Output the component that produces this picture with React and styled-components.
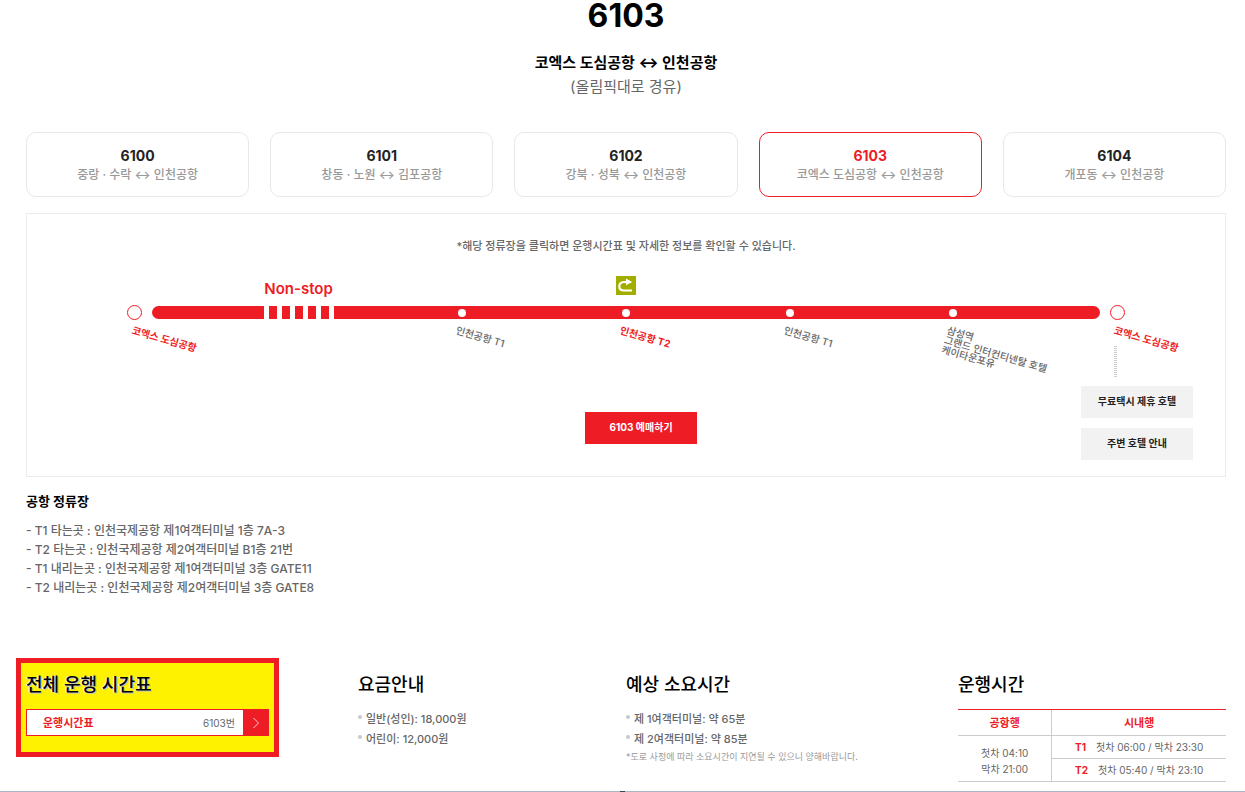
import React from "react";
import styled, { createGlobalStyle, css } from "styled-components";

const RED = "#ee1c25";

const GlobalStyle = createGlobalStyle`
  *, *::before, *::after { box-sizing: border-box; }
  body {
    margin: 0;
    background: #fff;
    color: #666;
    font-family: Inter, "Noto Sans CJK KR", sans-serif;
    font-size: 12px;
    line-height: 20px;
  }
  h1, h2, h3, p, ul, ol { margin: 0; padding: 0; }
  ul, ol { list-style: none; }
  a { color: inherit; text-decoration: none; }
  button { font-family: inherit; cursor: pointer; }
`;

const Page = styled.main`
  padding: 0 19px 9px 26px;
`;

const Header = styled.header`
  text-align: center;
`;

const RouteNumber = styled.h1`
  color: #000;
  font-size: 32px;
  line-height: 32px;
  font-weight: 700;
`;

const RouteName = styled.p`
  margin-top: 19px;
  color: #000;
  font-size: 15px;
  line-height: 24px;
  font-weight: 700;
`;

const RouteVia = styled.p`
  font-size: 15px;
  line-height: 24px;
`;

const RouteTabs = styled.nav`
  display: grid;
  grid-template-columns: repeat(5, 1fr);
  gap: 21px;
  margin-top: 33px;
`;

const RouteTab = styled.a`
  padding: 13px 8px 12px;
  border: 1px solid ${(p) => (p.$active ? RED : "#e8e8e8")};
  border-radius: 10px;
  text-align: center;
  color: #999;
  font-weight: 500;
  line-height: 18px;

  strong {
    display: block;
    color: ${(p) => (p.$active ? RED : "#222")};
    font-size: 14px;
    line-height: 20px;
    font-weight: 700;
  }
`;

const RoutePanel = styled.section`
  margin-top: 16px;
  padding: 22px 0 16px;
  border: 1px solid #ebebeb;
`;

const Notice = styled.p`
  margin-bottom: 20px;
  text-align: center;
  font-size: 11px;
  font-weight: 500;
`;

const Track = styled.div`
  display: grid;
  padding: 0 26px;
`;

const TrackBar = styled.div`
  grid-area: 1 / 1;
  height: 13px;
  margin: 30px calc(100% / 14 + 17px) 0;
  border-radius: 7px;
  background: ${RED};
`;

const Stops = styled.ol`
  grid-area: 1 / 1;
  display: grid;
  grid-template-columns: repeat(7, minmax(0, 1fr));
`;

const Stop = styled.li`
  display: flex;
  flex-direction: column;
  align-items: center;
`;

const StopTop = styled.div`
  height: 29px;
  color: ${RED};
  font-size: 15px;
  line-height: 26px;
  font-weight: 600;

  svg { display: block; }
`;

const markers = {
  terminal: css`
    width: 15px;
    border: 1px solid ${RED};
    border-radius: 50%;
    background: #fff;
  `,
  stop: css`
    width: 8px;
    height: 8px;
    margin: 4px 0 3px;
    border-radius: 50%;
    background: #fff;
  `,
  express: css`
    width: 70px;
    background: repeating-linear-gradient(90deg, #fff 0 5px, ${RED} 5px 13px);
    border: solid #fff;
    border-width: 1px 0;
    background-clip: padding-box;
  `,
};

const Marker = styled.span`
  flex: none;
  height: 15px;
  ${(p) => markers[p.$kind]}
`;

const StopLabel = styled.a`
  align-self: flex-start;
  height: 26px;
  margin-left: calc(50% - ${(p) => (p.$end ? 0 : 3)}px);
  padding-top: 5px;
  color: ${(p) => (p.$strong ? RED : "#666")};
  font-size: 10px;
  line-height: 10px;
  font-weight: ${(p) => (p.$strong ? 700 : 500)};
  white-space: pre;
  transform: rotate(16deg);
  transform-origin: 0 0;
`;

const Connector = styled.span`
  align-self: flex-start;
  width: 3px;
  height: 32px;
  margin-left: calc(50% - 3px);
  background: repeating-linear-gradient(#ccc 0 1px, #fff 1px 2px);
`;

const PanelActions = styled.div`
  display: grid;
  grid-template-columns: 1fr auto 1fr;
  margin-top: 8px;
  padding: 0 32px 0 62px;
`;

const BookButton = styled.button`
  grid-column: 2;
  width: 112px;
  height: 32px;
  margin-top: 26px;
  padding: 0 0 3px;
  border: 0;
  background: ${RED};
  color: #fff;
  font-size: 10px;
  font-weight: 700;
`;

const HotelLinks = styled.div`
  justify-self: end;
  display: grid;
  gap: 10px;
`;

const HotelButton = styled.button`
  width: 112px;
  height: 32px;
  padding: 0 0 3px;
  border: 0;
  background: #f2f2f2;
  color: #222;
  font-size: 10px;
  font-weight: 700;
`;

const Boarding = styled.section`
  margin-top: 15px;
`;

const BoardingTitle = styled.h2`
  margin-bottom: 11px;
  color: #000;
  font-size: 13px;
  line-height: 18px;
  font-weight: 700;
`;

const BoardingList = styled.ul`
  line-height: 19px;
  font-weight: 500;
`;

const InfoGrid = styled.div`
  display: grid;
  grid-template-columns: 83fr 67fr 83fr 67fr;
  align-items: start;
  margin-top: 61px;
`;

const InfoBlock = styled.section`
  padding-top: 12px;
`;

const HighlightBlock = styled.section`
  margin: 0 79px 0 -10px;
  padding: 7px 5px 16px;
  border: 5px solid ${RED};
  background: #fff200;

  h2 { text-shadow: 1px 1px 0 #c4c4cc, -1px 0 0 #fff; }
`;

const InfoTitle = styled.h2`
  margin-bottom: 9px;
  color: #000;
  font-size: 18px;
  line-height: 30px;
  font-weight: 500;
`;

const TimetableLink = styled.a`
  display: flex;
  align-items: center;
  height: 27px;
  padding-left: 16px;
  border: 1px solid ${RED};
  background: #fff;
  font-size: 10px;

  strong {
    flex: 1;
    color: ${RED};
    font-size: 11px;
    font-weight: 700;
  }
`;

const ArrowBox = styled.span`
  display: grid;
  place-items: center;
  align-self: stretch;
  width: 25px;
  margin-left: 8px;
  background: ${RED};
`;

const BulletList = styled.ul`
  font-size: 11px;
  font-weight: 500;

  li { display: flex; gap: 4px; }

  li::before {
    content: "";
    width: 4px;
    height: 4px;
    margin-top: 6px;
    border-radius: 50%;
    background: #c8c8c8;
  }
`;

const Footnote = styled.p`
  color: #999;
  font-size: 9px;
  line-height: 16px;
`;

const HoursTable = styled.table`
  width: 100%;
  border-collapse: collapse;
  table-layout: fixed;
  font-size: 10px;
  line-height: 16px;
  text-align: center;

  th, td { padding: 0; border-bottom: 1px solid #ccc; }
  thead th {
    height: 26px;
    border-top: 1px solid ${RED};
    color: ${RED};
    font-size: 11px;
    font-weight: 700;
  }
  th:first-child { width: 35%; }
  td { height: 23px; }
  th + th, td + td, tr + tr td { border-left: 1px solid #ccc; }
  td[rowspan] { padding-top: 4px; }
  td strong { margin-right: 10px; color: ${RED}; }
`;

const PageEdge = styled.footer`
  display: flex;
  justify-content: center;
  height: 1px;
  background: #a9b5c6;

  &::after { content: ""; width: 5px; background: #444; }
`;

const ROUTES = [
  ["6100", "중랑 · 수락 ↔ 인천공항"],
  ["6101", "창동 · 노원 ↔ 김포공항"],
  ["6102", "강북 · 성북 ↔ 인천공항"],
  ["6103", "코엑스 도심공항 ↔ 인천공항"],
  ["6104", "개포동 ↔ 인천공항"],
];

const STOPS = [
  { kind: "terminal", label: "코엑스 도심공항", strong: true },
  { kind: "express", top: "Non-stop" },
  { kind: "stop", label: "인천공항 T1" },
  { kind: "stop", label: "인천공항 T2", strong: true, turn: true },
  { kind: "stop", label: "인천공항 T1" },
  { kind: "stop", label: "삼성역\n그랜드 인터컨티넨탈 호텔\n케이타운포유" },
  { kind: "terminal", label: "코엑스 도심공항", strong: true, connector: true },
];

const BOARDING = [
  "- T1 타는곳 : 인천국제공항 제1여객터미널 1층 7A-3",
  "- T2 타는곳 : 인천국제공항 제2여객터미널 B1층 21번",
  "- T1 내리는곳 : 인천국제공항 제1여객터미널 3층 GATE11",
  "- T2 내리는곳 : 인천국제공항 제2여객터미널 3층 GATE8",
];

const TurnIcon = () => (
  <svg width="20" height="19" viewBox="0 0 20 19" aria-label="회차">
    <rect width="20" height="19" fill="#a2ad00" />
    <path d="M16 14.5H7.5C4.8 14.5 3.3 12.9 3.3 10.5S4.9 6 7.8 6H11" fill="none" stroke="#fff" strokeWidth="2.2" />
    <path d="M10 2.6 16.2 6 10 9.2Z" fill="#fff" />
  </svg>
);

const Chevron = () => (
  <svg width="8" height="12" viewBox="0 0 8 12" aria-hidden="true">
    <path d="M1.5 1 6.5 6 1.5 11" fill="none" stroke="#fff" strokeOpacity=".8" />
  </svg>
);

export default function App() {
  return (
    <>
      <GlobalStyle />
      <Page>
        <Header>
          <RouteNumber>6103</RouteNumber>
          <RouteName>코엑스 도심공항 ↔ 인천공항</RouteName>
          <RouteVia>(올림픽대로 경유)</RouteVia>
        </Header>

        <RouteTabs>
          {ROUTES.map(([no, name]) => (
            <RouteTab key={no} href={`#${no}`} $active={no === "6103"}>
              <strong>{no}</strong>
              {name}
            </RouteTab>
          ))}
        </RouteTabs>

        <RoutePanel>
          <Notice>*해당 정류장을 클릭하면 운행시간표 및 자세한 정보를 확인할 수 있습니다.</Notice>
          <Track>
            <TrackBar />
            <Stops>
              {STOPS.map((s, i) => (
                <Stop key={i}>
                  <StopTop>{s.turn ? <TurnIcon /> : s.top}</StopTop>
                  <Marker $kind={s.kind} />
                  {s.label && (
                    <StopLabel href="#stop" $strong={s.strong} $end={s.kind === "terminal"}>
                      {s.label}
                    </StopLabel>
                  )}
                  {s.connector && <Connector />}
                </Stop>
              ))}
            </Stops>
          </Track>
          <PanelActions>
            <BookButton type="button">6103 예매하기</BookButton>
            <HotelLinks>
              <HotelButton type="button">무료택시 제휴 호텔</HotelButton>
              <HotelButton type="button">주변 호텔 안내</HotelButton>
            </HotelLinks>
          </PanelActions>
        </RoutePanel>

        <Boarding>
          <BoardingTitle>공항 정류장</BoardingTitle>
          <BoardingList>
            {BOARDING.map((t) => (
              <li key={t}>{t}</li>
            ))}
          </BoardingList>
        </Boarding>

        <InfoGrid>
          <HighlightBlock>
            <InfoTitle>전체 운행 시간표</InfoTitle>
            <TimetableLink href="#timetable">
              <strong>운행시간표</strong>
              6103번
              <ArrowBox>
                <Chevron />
              </ArrowBox>
            </TimetableLink>
          </HighlightBlock>

          <InfoBlock>
            <InfoTitle>요금안내</InfoTitle>
            <BulletList>
              <li>일반(성인): 18,000원</li>
              <li>어린이: 12,000원</li>
            </BulletList>
          </InfoBlock>

          <InfoBlock>
            <InfoTitle>예상 소요시간</InfoTitle>
            <BulletList>
              <li>제 1여객터미널: 약 65분</li>
              <li>제 2여객터미널: 약 85분</li>
            </BulletList>
            <Footnote>*도로 사정에 따라 소요시간이 지연될 수 있으니 양해바랍니다.</Footnote>
          </InfoBlock>

          <InfoBlock>
            <InfoTitle>운행시간</InfoTitle>
            <HoursTable>
              <thead>
                <tr>
                  <th scope="col">공항행</th>
                  <th scope="col">시내행</th>
                </tr>
              </thead>
              <tbody>
                <tr>
                  <td rowSpan={2}>
                    첫차 04:10
                    <br />
                    막차 21:00
                  </td>
                  <td>
                    <strong>T1</strong>첫차 06:00 / 막차 23:30
                  </td>
                </tr>
                <tr>
                  <td>
                    <strong>T2</strong>첫차 05:40 / 막차 23:10
                  </td>
                </tr>
              </tbody>
            </HoursTable>
          </InfoBlock>
        </InfoGrid>
      </Page>
      <PageEdge />
    </>
  );
}
